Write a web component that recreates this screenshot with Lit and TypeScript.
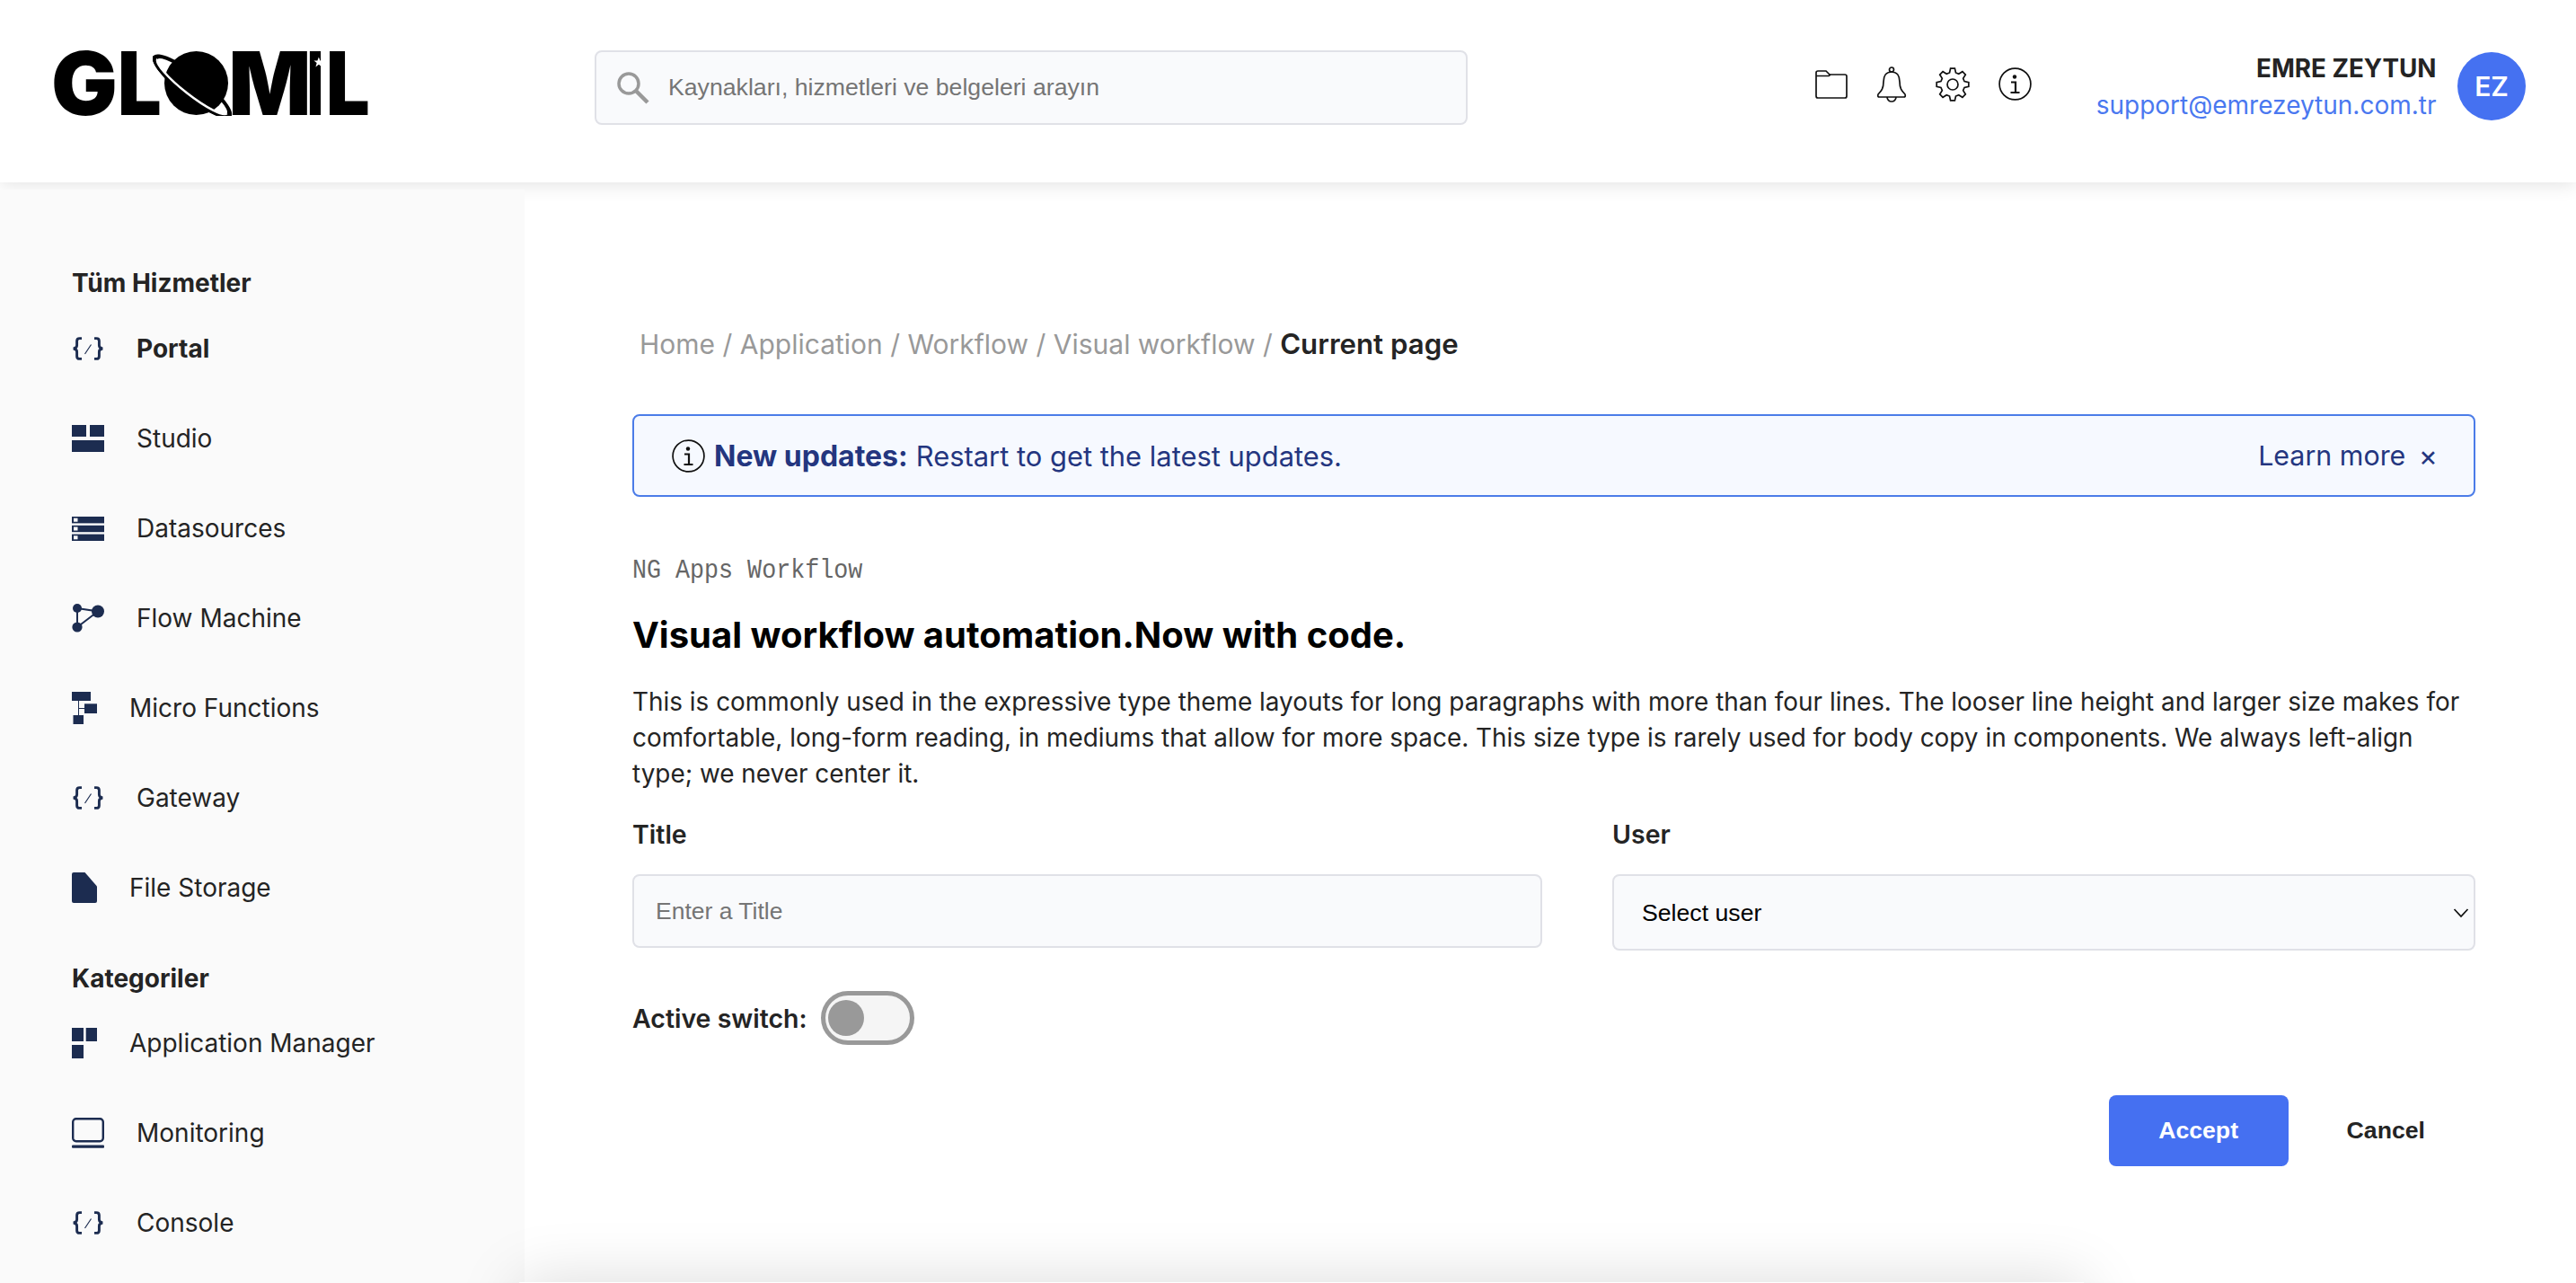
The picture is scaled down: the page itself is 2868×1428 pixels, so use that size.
import { LitElement, html, css } from 'lit';
import { customElement } from 'lit/decorators.js';

// 8 tooth gear outline for the header settings icon
function gearPath(cx: number, cy: number, outer: number, inner: number, teeth: number) {
  const pts: string[] = [];
  const step = (Math.PI * 2) / teeth;
  for (let i = 0; i < teeth; i++) {
    const a = i * step - Math.PI / 2;
    const at = (r: number, d: number) =>
      `${(cx + r * Math.cos(a + d)).toFixed(2)} ${(cy + r * Math.sin(a + d)).toFixed(2)}`;
    pts.push(`${i === 0 ? 'M' : 'L'}${at(inner, -step * 0.33)}`);
    pts.push(`L${at(outer, -step * 0.17)}`);
    pts.push(`L${at(outer, step * 0.17)}`);
    pts.push(`L${at(inner, step * 0.33)}`);
  }
  return pts.join(' ') + 'Z';
}

const infoIcon = html`<svg class="line" width="37" height="37" viewBox="0 0 37 37">
  <circle cx="18.5" cy="18.5" r="17.4" />
  <circle class="solid" cx="18" cy="10.5" r="2.2" />
  <path stroke-width="2.2" d="M14 16.5h5v11.5M13.5 28h10" />
</svg>`;

const codeIcon = html`<svg class="nav-svg" width="36" height="26" viewBox="0 0 36 26">
  <g fill="none" stroke="#1c2c50" stroke-width="2.9">
    <path d="M11 1.6H8.6Q5.6 1.6 5.6 4.6V9.5Q5.6 12.3 1.8 13Q5.6 13.7 5.6 16.5V21.4Q5.6 24.4 8.6 24.4H11" />
    <path d="M25 1.6H27.4Q30.4 1.6 30.4 4.6V9.5Q30.4 12.3 34.2 13Q30.4 13.7 30.4 16.5V21.4Q30.4 24.4 27.4 24.4H25" />
    <path stroke-width="1.2" d="M14.5 19L21.5 8.5" />
  </g>
</svg>`;

const studioIcon = html`<svg class="nav-svg" width="36" height="30" viewBox="0 0 36 30" fill="#1c2c50">
  <rect width="16" height="13" /><rect x="20" width="16" height="13" /><rect y="17" width="36" height="13" />
</svg>`;

const dataIcon = html`<svg class="nav-svg" width="36" height="27" viewBox="0 0 36 27">
  <g fill="#1c2c50"><rect width="36" height="7.4" /><rect y="9.8" width="36" height="7.4" /><rect y="19.6" width="36" height="7.4" /></g>
  <g fill="#fafafa"><rect x="2" y="1.7" width="4.5" height="4" /><rect x="2" y="11.5" width="4.5" height="4" /><rect x="2" y="21.3" width="4.5" height="4" /></g>
</svg>`;

const flowIcon = html`<svg class="nav-svg" width="36" height="32" viewBox="0 0 36 32">
  <path d="M6 5L29 8.5L6 26Z" fill="none" stroke="#1c2c50" stroke-width="2" />
  <g fill="#1c2c50"><circle cx="6" cy="5" r="5" /><circle cx="29" cy="8.5" r="7" /><circle cx="6" cy="26" r="5.6" /></g>
</svg>`;

const microIcon = html`<svg class="nav-svg" width="28" height="36" viewBox="0 0 28 36">
  <path d="M7.5 8V30M7.5 18.5H16" fill="none" stroke="#1c2c50" stroke-width="1" />
  <g fill="#1c2c50"><rect width="21" height="10" /><rect x="14" y="13.3" width="14" height="10.7" /><rect x="1.5" y="26" width="11.5" height="10" /></g>
</svg>`;

const fileIcon = html`<svg class="nav-svg" width="28" height="34" viewBox="0 0 28 34">
  <path fill="#1c2c50" d="M2 0H14.5L28 15.5V32Q28 34 26 34H2Q0 34 0 32V2Q0 0 2 0Z" />
</svg>`;

const appsIcon = html`<svg class="nav-svg" width="28" height="34" viewBox="0 0 28 34" fill="#1c2c50">
  <rect width="13" height="15" /><rect x="15.7" width="12.3" height="15" /><rect y="19" width="13" height="15" />
</svg>`;

const monitorIcon = html`<svg class="nav-svg" width="36" height="34" viewBox="0 0 36 34">
  <rect x="1.2" y="1.2" width="33.6" height="25" rx="3.5" fill="none" stroke="#1c2c50" stroke-width="2.4" />
  <rect y="30.5" width="36" height="3.2" rx="1" fill="#1c2c50" />
</svg>`;

interface NavItem {
  label: string;
  icon: unknown;
  active?: boolean;
}

const services: NavItem[] = [
  { label: 'Portal', icon: codeIcon, active: true },
  { label: 'Studio', icon: studioIcon },
  { label: 'Datasources', icon: dataIcon },
  { label: 'Flow Machine', icon: flowIcon },
  { label: 'Micro Functions', icon: microIcon },
  { label: 'Gateway', icon: codeIcon },
  { label: 'File Storage', icon: fileIcon },
];

const categories: NavItem[] = [
  { label: 'Application Manager', icon: appsIcon },
  { label: 'Monitoring', icon: monitorIcon },
  { label: 'Console', icon: codeIcon },
];

@customElement('app-root')
export class AppRoot extends LitElement {
  static styles = css`
    :host {
      display: block;
      height: 100vh;
      overflow: hidden;
      background: #fff;
      color: #242424;
      font-family: Inter, 'Liberation Sans', sans-serif;
    }

    /* header */
    .header {
      position: relative;
      height: 203px;
      box-sizing: border-box;
      padding: 0 56px 8px 61px;
      display: flex;
      align-items: center;
      background: #fff;
      box-shadow: 0 2px 20px rgba(0, 0, 0, 0.12);
    }
    .logo {
      display: flex;
      align-items: center;
      flex: none;
      width: 348px;
      height: 71px;
      margin-bottom: 10px;
      color: #000;
      font-size: 98px;
      font-weight: 900;
      line-height: 71px;
    }
    .logo span {
      display: block;
      flex: none;
      transform-origin: left center;
    }
    .logo .g { width: 76px; letter-spacing: -6px; transform: translateX(-4px); }
    .logo .l1 { width: 33px; letter-spacing: -6px; transform: translateX(-6px) scaleX(0.88); }
    .logo .m { width: 85px; margin-left: 1px; letter-spacing: -14px; transform: translateX(-6.5px) scaleX(0.98); }
    .logo .i { position: relative; width: 25px; letter-spacing: -4px; transform: translateX(-4px) scaleX(0.63); }
    .logo .l2 { width: 38px; transform: translateX(-8px) scaleX(0.88); }
    .logo svg { display: block; flex: none; }
    .logo .star { position: absolute; left: 11px; top: 6px; }
    .search {
      display: flex;
      align-items: center;
      gap: 20px;
      width: 972px;
      height: 83px;
      box-sizing: border-box;
      margin-left: 253px;
      padding-left: 22px;
      border: 2px solid #e0e1e7;
      border-radius: 8px;
      background: #f9fafc;
    }
    .search input {
      flex: 1;
      border: 0;
      outline: 0;
      padding: 0;
      background: transparent;
      font: 26.67px 'Liberation Sans', Arial, sans-serif;
    }
    .search input::placeholder { color: #757575; opacity: 1; }
    .header-icons {
      display: flex;
      align-items: center;
      gap: 32px;
      margin-left: auto;
      margin-bottom: 8px;
    }
    .line { display: block; fill: none; stroke: #111; stroke-width: 1.7; }
    .line .solid { fill: #111; stroke: none; }
    .user {
      margin-left: 72px;
      margin-bottom: 1px;
      text-align: right;
    }
    .user-name { font-size: 27.8px; font-weight: 700; line-height: 38px; }
    .user-mail { margin-top: 2px; color: #4a78f0; font-size: 28px; line-height: 40px; }
    .avatar {
      display: flex;
      align-items: center;
      justify-content: center;
      flex: none;
      width: 76px;
      height: 76px;
      margin: 0 0 3px 23.5px;
      border-radius: 50%;
      background: #4571f1;
      color: #fff;
      font-size: 30px;
      font-weight: 600;
    }

    /* body */
    .layout { display: flex; align-items: stretch; min-height: 1225px; }
    .sidebar {
      position: relative;
      flex: none;
      width: 584px;
      margin-top: 8px;
      box-sizing: border-box;
      padding: 82px 0 0 80px;
      background: #fafafa;
    }
    .section-title { font-size: 28px; font-weight: 700; line-height: 44px; margin-bottom: 1px; }
    .section-title.second { margin-top: 29px; margin-bottom: 0; }
    .nav-item {
      display: flex;
      align-items: center;
      gap: 36px;
      height: 100px;
      font-size: 28px;
    }
    .nav-item.active { font-weight: 700; }
    .nav-svg { display: block; flex: none; }

    .main {
      position: relative;
      z-index: 1;
      flex: 1;
      min-width: 0;
      padding: 158px 112px 0 120px;
    }
    .crumbs { padding-left: 8px; color: #999; font-size: 30px; line-height: 44px; }
    .crumbs b { color: #242424; font-size: 31.2px; font-weight: 600; }
    .alert {
      display: flex;
      align-items: center;
      height: 92px;
      box-sizing: border-box;
      margin-top: 56px;
      padding: 0 40px 0 42px;
      border: 2px solid #4b7ce8;
      border-radius: 8px;
      background: #f6f9ff;
      color: #24367f;
      font-size: 30.9px;
    }
    .alert .line { margin-right: 10px; }
    .alert b { font-size: 32px; font-weight: 700; margin-right: 9px; }
    .alert .more { margin-left: auto; font-size: 30.4px; }
    .alert .close { margin-left: 14.5px; font-size: 32px; }
    .kicker {
      margin-top: 62px;
      color: #666;
      font: 26.7px/40px 'Liberation Mono', 'DejaVu Sans Mono', monospace;
      transform: scaleY(1.12);
      transform-origin: left center;
    }
    h2 { margin: 26px 0 0; color: #000; font-size: 40px; font-weight: 700; line-height: 52px; }
    p { margin: 28px 0 0; font-size: 27.9px; line-height: 40px; }
    .fields {
      display: grid;
      grid-template-columns: 1013px 1fr;
      column-gap: 78px;
      margin-top: 28px;
    }
    label { display: block; font-size: 28.5px; font-weight: 600; line-height: 40px; }
    .control { position: relative; margin-top: 24px; }
    .field-input {
      display: block;
      width: 100%;
      height: 82px;
      box-sizing: border-box;
      padding: 0 24px;
      border: 2px solid #e0e1e7;
      border-radius: 8px;
      outline: 0;
      background: #f9fafc;
      font: 26.5px 'Liberation Sans', Arial, sans-serif;
    }
    .field-input::placeholder { color: #757575; opacity: 1; }
    select.field-input {
      height: 85px;
      padding: 0 31px;
      appearance: none;
      color: #000;
      font-size: 26.67px;
    }
    .chevron { position: absolute; right: 7px; top: 37px; pointer-events: none; }
    .switch-row {
      display: flex;
      align-items: center;
      gap: 15px;
      margin-top: 45px;
      font-size: 28.5px;
      font-weight: 600;
    }
    .switch {
      display: flex;
      align-items: center;
      width: 104px;
      height: 60px;
      box-sizing: border-box;
      padding-left: 3px;
      border: 5px solid #999;
      border-radius: 30px;
      background: #f5f5f5;
    }
    .knob { width: 40px; height: 40px; border-radius: 50%; background: #999; }
    .actions {
      display: flex;
      justify-content: flex-end;
      align-items: center;
      gap: 9px;
      margin-top: 56px;
    }
    button {
      height: 79px;
      border: 0;
      border-radius: 8px;
      background: transparent;
      color: #242424;
      font: bold 26.67px 'Liberation Sans', Arial, sans-serif;
    }
    .accept { width: 200px; background: #4570f1; color: #fff; }
    .cancel { padding: 0 56px; }

    /* next card, only its shadow shows above the fold */
    .next-card {
      width: 1742px;
      height: 200px;
      margin: 129px 0 0 -126px;
      background: #fff;
      box-shadow: 0 0 70px rgba(0, 0, 0, 0.15);
    }
  `;

  private renderNav(items: NavItem[]) {
    return items.map(
      (item) => html`<div class="nav-item ${item.active ? 'active' : ''}">${item.icon}<span>${item.label}</span></div>`
    );
  }

  private renderLogo() {
    return html`<div class="logo">
      <span class="g">G</span>
      <span class="l1">L</span>
      <svg width="90" height="72" viewBox="170 57 90 72">
        <g transform="rotate(38 214 96)">
          <ellipse cx="214" cy="96" rx="55" ry="14" fill="#000" />
          <ellipse cx="214" cy="96" rx="49" ry="9.5" fill="#fff" />
        </g>
        <ellipse cx="218.5" cy="92.5" rx="35.5" ry="35.5" fill="#000" />
        <g transform="rotate(38 214 96)">
          <path fill="#000" d="M159 96A55 14 0 0 0 269 96L263 96A49 9.5 0 0 1 165 96Z" />
          <path fill="none" stroke="#fff" stroke-width="2.5" d="M165 96A49 9.5 0 0 0 263 96" />
        </g>
      </svg>
      <span class="m">M</span>
      <span class="i">I<svg class="star" width="19" height="12" viewBox="0 0 24 24" preserveAspectRatio="none"><path fill="#fff" d="M12 1l3 8h8l-6.5 5 2.5 9-7-5.500L5 23l2.500-9L1 9h8z" /></svg></span>
      <span class="l2">L</span>
    </div>`;
  }

  render() {
    return html`
      <header class="header">
        ${this.renderLogo()}
        <div class="search">
          <svg width="38" height="38" viewBox="0 0 38 38" fill="none" stroke="#999" stroke-width="3.5">
            <circle cx="14" cy="14" r="11" />
            <path stroke-width="4.5" d="M22 22L35 35" />
          </svg>
          <input placeholder="Kaynakları, hizmetleri ve belgeleri arayın" />
        </div>
        <div class="header-icons">
          <svg class="line" width="36" height="32" viewBox="0 0 36 32">
            <path d="M1 29V3Q1 1 3 1H12L16 5H33Q35 5 35 7V29Q35 31 33 31H3Q1 31 1 29Z" />
            <path d="M1 6.5H15L17 5" />
          </svg>
          <svg class="line" width="34" height="40" viewBox="0 0 34 40">
            <circle cx="17" cy="3.5" r="2.5" />
            <path d="M17 6C10.5 6 8 11 8 17C8 24 6 27 2 31Q1 34 3.5 34H30.5Q33 34 32 31C28 27 26 24 26 17C26 11 23.5 6 17 6Z" />
            <path d="M12 34A5 5 0 0 0 22 34" />
          </svg>
          <svg class="line" width="38" height="38" viewBox="0 0 38 38">
            <path d=${gearPath(19, 19, 18, 13.5, 8)} />
            <circle cx="19" cy="19" r="6" />
          </svg>
          ${infoIcon}
        </div>
        <div class="user">
          <div class="user-name">EMRE ZEYTUN</div>
          <div class="user-mail">support@emrezeytun.com.tr</div>
        </div>
        <div class="avatar">EZ</div>
      </header>
      <div class="layout">
        <aside class="sidebar">
          <div class="section-title">Tüm Hizmetler</div>
          ${this.renderNav(services)}
          <div class="section-title second">Kategoriler</div>
          ${this.renderNav(categories)}
        </aside>
        <main class="main">
          <div class="crumbs">Home / Application / Workflow / Visual workflow / <b>Current page</b></div>
          <div class="alert">
            ${infoIcon}
            <b>New updates:</b> Restart to get the latest updates.
            <span class="more">Learn more</span>
            <span class="close">×</span>
          </div>
          <div class="kicker">NG Apps Workflow</div>
          <h2>Visual workflow automation.Now with code.</h2>
          <p>
            This is commonly used in the expressive type theme layouts for long paragraphs with more than four lines. The
            looser line height and larger size makes for comfortable, long-form reading, in mediums that allow for more
            space. This size type is rarely used for body copy in components. We always left-align type; we never center
            it.
          </p>
          <div class="fields">
            <div>
              <label>Title</label>
              <div class="control"><input class="field-input" placeholder="Enter a Title" /></div>
            </div>
            <div>
              <label>User</label>
              <div class="control">
                <select class="field-input"><option>Select user</option></select>
                <svg class="chevron" width="18" height="12" viewBox="0 0 18 12" fill="none" stroke="#111" stroke-width="1.7">
                  <path d="M1.5 2L9 10L16.5 2" />
                </svg>
              </div>
            </div>
          </div>
          <div class="switch-row">
            <span>Active switch:</span>
            <div class="switch"><div class="knob"></div></div>
          </div>
          <div class="actions">
            <button class="accept">Accept</button>
            <button class="cancel">Cancel</button>
          </div>
          <div class="next-card"></div>
        </main>
      </div>
    `;
  }
}

declare global {
  interface HTMLElementTagNameMap {
    'app-root': AppRoot;
  }
}
